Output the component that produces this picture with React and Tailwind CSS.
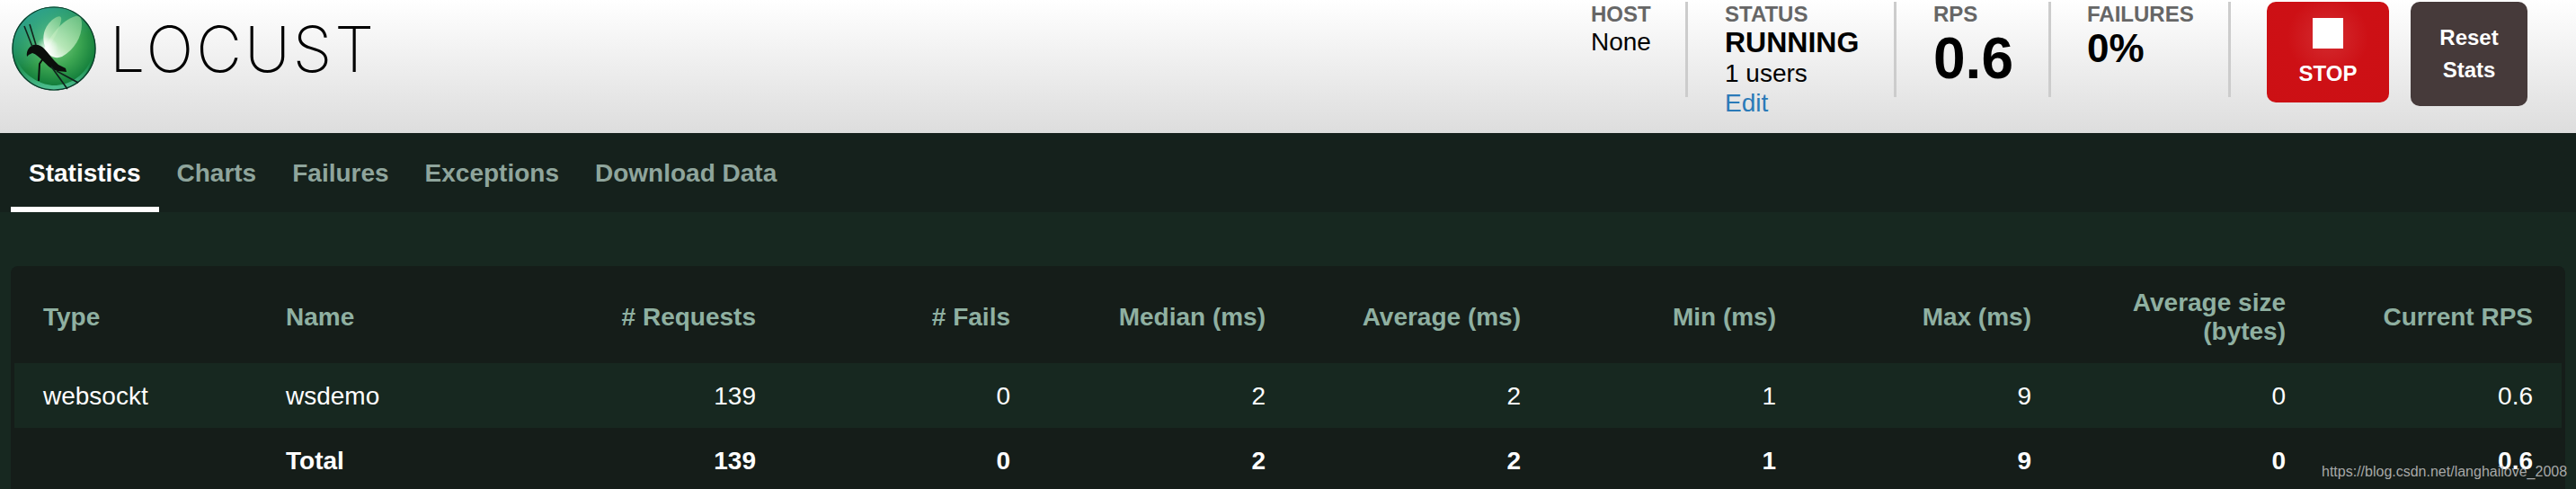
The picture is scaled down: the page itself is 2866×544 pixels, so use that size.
const columns = [
  { label: "Type", align: "text-left", width: "w-[270px]" },
  { label: "Name", align: "text-left", width: "w-[304px]" },
  { label: "# Requests", align: "text-right", width: "w-[283px]" },
  { label: "# Fails", align: "text-right", width: "w-[283px]" },
  { label: "Median (ms)", align: "text-right", width: "w-[284px]" },
  { label: "Average (ms)", align: "text-right", width: "w-[284px]" },
  { label: "Min (ms)", align: "text-right", width: "w-[284px]" },
  { label: "Max (ms)", align: "text-right", width: "w-[284px]" },
  { label: "Average size (bytes)", align: "text-right", width: "w-[283px]" },
  { label: "Current RPS", align: "text-right", width: "" },
];

const row = ["websockt", "wsdemo", "139", "0", "2", "2", "1", "9", "0", "0.6"];
const total = ["", "Total", "139", "0", "2", "2", "1", "9", "0", "0.6"];

const tabs = ["Statistics", "Charts", "Failures", "Exceptions", "Download Data"];

const Logo = () => (
  <svg width="94" height="94" viewBox="0 0 94 94" className="shrink-0">
    <defs>
      <radialGradient id="ball" cx="0.5" cy="0.42" r="0.6">
        <stop offset="0" stopColor="#86d68c" />
        <stop offset="0.5" stopColor="#3da652" />
        <stop offset="0.85" stopColor="#15803c" />
        <stop offset="1" stopColor="#0d5f38" />
      </radialGradient>
      <linearGradient id="rim" x1="0.1" y1="0" x2="0.45" y2="0.6">
        <stop offset="0" stopColor="#2fa69c" />
        <stop offset="1" stopColor="#2fa69c" stopOpacity="0" />
      </linearGradient>
      <linearGradient id="crescent" x1="0" y1="0" x2="0" y2="1">
        <stop offset="0" stopColor="#45c795" stopOpacity="0" />
        <stop offset="1" stopColor="#5fd3a6" stopOpacity="0.85" />
      </linearGradient>
      <linearGradient id="wing" x1="0.85" y1="0" x2="0.1" y2="0.95">
        <stop offset="0" stopColor="#8bd394" stopOpacity="0.7" />
        <stop offset="0.65" stopColor="#c4edc2" stopOpacity="0.85" />
        <stop offset="1" stopColor="#ffffff" />
      </linearGradient>
      <radialGradient id="glow" cx="0.5" cy="0.5" r="0.5">
        <stop offset="0" stopColor="#ffffff" stopOpacity="0.95" />
        <stop offset="1" stopColor="#ffffff" stopOpacity="0" />
      </radialGradient>
    </defs>
    <circle cx="47" cy="47" r="46.5" fill="url(#ball)" />
    <circle cx="47" cy="47" r="46.5" fill="url(#rim)" />
    <path d="M5 58 C14 80 36 88 47 88 C62 88 80 80 89 58 C84 84 64 93 47 93 C28 93 10 84 5 58 Z" fill="url(#crescent)" />
    <circle cx="47" cy="47" r="46" fill="none" stroke="#0b3a2a" strokeWidth="1.2" />
    {/* wings */}
    <path d="M37 44 C32 30 40 17 50 12 C54 10 56 12 55 16 C53 26 46 38 40 48 Z" fill="url(#wing)" />
    <path d="M36 48 C42 34 56 15 71 11 C76 10 78 14 78 20 C78 34 70 48 56 56 C49 59 42 56 36 48 Z" fill="url(#wing)" />
    <circle cx="39" cy="47" r="13" fill="url(#glow)" />
    {/* body, legs and feelers */}
    <path d="M17 56 C16 50 19 45 24 43 C29 42 33 44 36 47 C41 52 46 60 52 65 L60 69 L61 73 L51 72 C44 70 40 66 35 61 C31 57 27 53 23 52 L19 54 Z" fill="#0b0e0b" />
    <path d="M23 45 L14 22 M27 43 L20 20" stroke="#12241c" strokeWidth="1.6" fill="none" />
    <path d="M35 58 L31 64 L30 83" stroke="#0b0e0b" strokeWidth="2" fill="none" />
    <path d="M44 67 L62 92 M50 72 L74 85" stroke="#10221c" strokeWidth="1.7" fill="none" />
  </svg>
);

export default function App() {
  return (
    <div className="h-[544px] overflow-hidden relative bg-[#172820] font-['Liberation_Sans',Arial,sans-serif]">
      {/* Header */}
      <header className="h-[148px] flex items-start justify-between bg-gradient-to-b from-white to-[#dddddd]">
        <div className="flex items-start pl-[13px] pt-[7px]">
          <Logo />
          <span className="ml-[15px] mt-[6px] text-[70px] leading-[84px] font-extralight tracking-[3px] text-black font-['Inter',sans-serif]">
            LOCUST
          </span>
        </div>
        <div className="flex items-start pt-[2px] pr-[54px]">
          <div className="w-[109px] pl-[1px] h-[106px] border-r-[3px] border-[#cccccc]">
            <div className="text-[24px] leading-[28px] font-bold text-[#666666]">HOST</div>
            <div className="text-[28px] leading-[32px] text-black mt-[1px]">None</div>
          </div>
          <div className="w-[232px] pl-[41px] h-[106px] border-r-[3px] border-[#cccccc]">
            <div className="text-[24px] leading-[28px] font-bold text-[#666666]">STATUS</div>
            <div className="text-[32px] leading-[32px] font-bold text-black mt-[1px]">RUNNING</div>
            <div className="text-[28px] leading-[34px] text-black mt-[2px] whitespace-nowrap">1 users</div>
            <a className="block text-[28px] leading-[32px] text-[#2a7ab8]">Edit</a>
          </div>
          <div className="w-[172px] pl-[41px] h-[106px] border-r-[3px] border-[#cccccc]">
            <div className="text-[24px] leading-[28px] font-bold text-[#666666]">RPS</div>
            <div className="text-[64px] leading-[64px] font-bold text-black mt-[3px]">0.6</div>
          </div>
          <div className="w-[200px] pl-[40px] h-[106px] border-r-[3px] border-[#cccccc]">
            <div className="text-[24px] leading-[28px] font-bold text-[#666666]">FAILURES</div>
            <div className="text-[44px] leading-[44px] font-bold text-black mt-[2px]">0%</div>
          </div>
          <button className="ml-[40px] w-[136px] h-[112px] rounded-[10px] flex flex-col items-center bg-[radial-gradient(circle_at_50%_35%,#d42c30_0%,#cd1015_45%,#cc1014_100%)] text-white text-[24px] font-bold">
            <span className="mt-[18px] block size-[34px] bg-white"></span>
            <span className="mt-[14px] leading-[28px]">STOP</span>
          </button>
          <button className="ml-[24px] w-[130px] h-[116px] rounded-[10px] bg-[#463a3a] text-white text-[24px] leading-[36px] font-bold">
            Reset
            <br />
            Stats
          </button>
        </div>
      </header>

      {/* Tabs */}
      <nav className="h-[88px] bg-[#15211c] flex pl-[12px] text-[28px] font-bold">
        {tabs.map((tab, i) => (
          <a
            key={tab}
            className={
              i === 0
                ? "h-full px-[20px] pt-[29px] leading-[32px] text-white border-b-[6px] border-white"
                : "h-full px-[20px] pt-[29px] leading-[32px] text-[#8fa59c]"
            }
          >
            {tab}
          </a>
        ))}
      </nav>

      {/* Table */}
      <div className="mt-[60px] mx-[12px] rounded-[8px] bg-[#151d19] px-[4px] h-[300px]">
        <table className="table-fixed w-full border-collapse text-[28px]">
          <thead>
            <tr className="h-[108px] text-[#8fb0a1] font-bold">
              {columns.map((c) => (
                <th key={c.label} className={`${c.align} ${c.width} px-[32px] leading-[32px] font-bold pt-[6px]`}>
                  {c.label}
                </th>
              ))}
            </tr>
          </thead>
          <tbody>
            <tr className="h-[72px] bg-[#172820] text-white">
              {row.map((v, i) => (
                <td key={i} className={`${columns[i].align} px-[32px] pt-[2px]`}>{v}</td>
              ))}
            </tr>
            <tr className="h-[74px] text-white font-bold">
              {total.map((v, i) => (
                <td key={i} className={`${columns[i].align} px-[32px]`}>{v}</td>
              ))}
            </tr>
          </tbody>
        </table>
      </div>

      {/* Watermark */}
      <span className="absolute left-[2583px] top-[514px] text-[16px] leading-[22px] text-[#c4c4c4]/85 whitespace-nowrap">
        https://blog.csdn.net/langhailove_2008
      </span>
    </div>
  );
}
